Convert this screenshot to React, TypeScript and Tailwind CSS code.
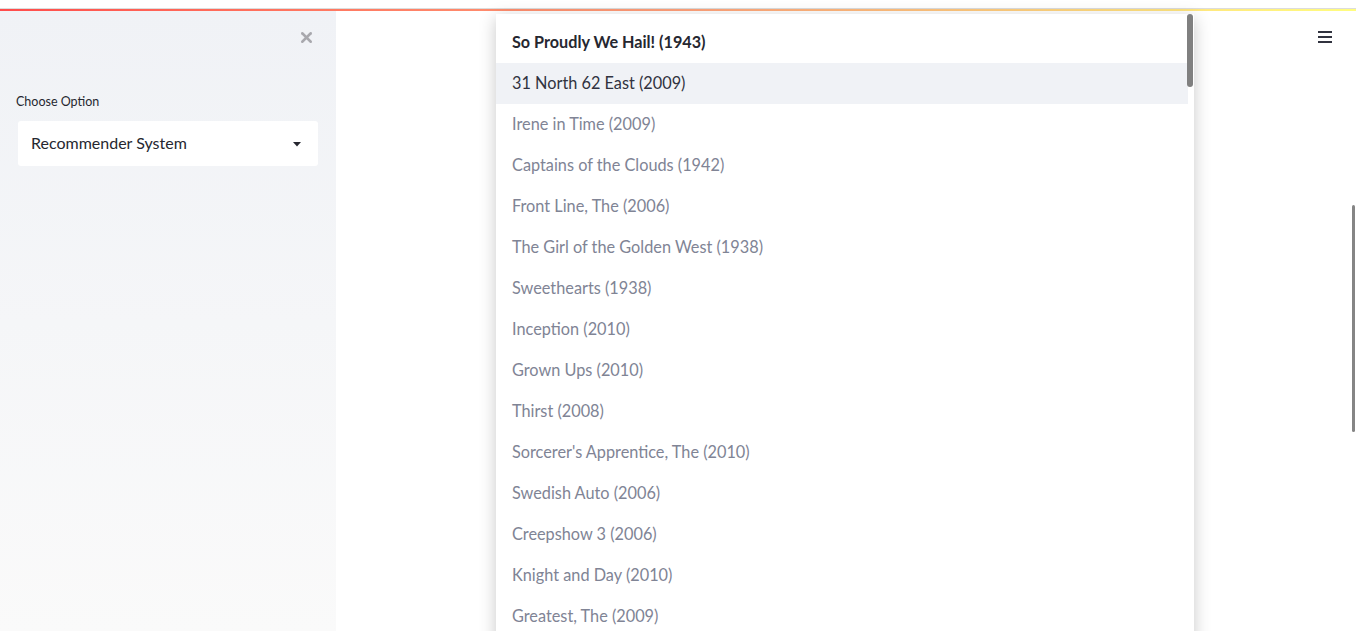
import { X } from 'lucide-react';

const movies = [
  'Irene in Time (2009)',
  'Captains of the Clouds (1942)',
  'Front Line, The (2006)',
  'The Girl of the Golden West (1938)',
  'Sweethearts (1938)',
  'Inception (2010)',
  'Grown Ups (2010)',
  'Thirst (2008)',
  "Sorcerer's Apprentice, The (2010)",
  'Swedish Auto (2006)',
  'Creepshow 3 (2006)',
  'Knight and Day (2010)',
  'Greatest, The (2009)',
];

const App = () => {
  return (
    <div className="relative h-[631px] w-[1356px] overflow-hidden bg-white font-['Lato',sans-serif]">
      {/* top decoration */}
      <div className="h-[8px] bg-white" />
      <div className="h-[1px] bg-[#dcdcdc]" />
      <div className="h-[2px] bg-gradient-to-r from-[#ff4b4b] via-[#ffa07a] to-[#fffd80]" />

      <div className="flex h-[620px]">
        {/* Sidebar */}
        <aside className="relative w-[336px] shrink-0 bg-gradient-to-b from-[#f0f2f6] to-[#fafafa]">
          <div className="flex justify-end pr-[21px] pt-[18px]">
            <X size={17} strokeWidth={3.5} className="text-[#a8a8ad]" />
          </div>
          <div className="pl-[16px] pt-[47px]">
            <div className="text-[12.5px] leading-[18px] text-[#262730]">Choose Option</div>
            <div className="mt-[10px] ml-[2px] flex h-[45px] w-[300px] items-center justify-between rounded-[3px] bg-white pb-[1px] pl-[13px] pr-[17px]">
              <span className="text-[16px] leading-[20px] text-[#262730]">Recommender System</span>
              <svg width="8" height="5" viewBox="0 0 8 5" className="mt-[2px]">
                <path d="M0 0 H8 L4 4.5 Z" fill="#262730" />
              </svg>
            </div>
          </div>
        </aside>

        {/* Main */}
        <main className="relative flex-1">
          <div className="flex justify-end pr-[24px] pt-[20px]">
            <div className="flex w-[14px] flex-col gap-[3px]">
              <span className="h-[2px] bg-[#31333f]" />
              <span className="h-[2px] bg-[#31333f]" />
              <span className="h-[2px] bg-[#31333f]" />
            </div>
          </div>
          {/* page scrollbar */}
          <div className="absolute right-[1px] top-[194px] h-[227px] w-[3px] rounded-full bg-[#858585]" />
        </main>
      </div>

      {/* open dropdown list */}
      <div className="absolute left-[496px] top-[14px] h-[640px] w-[698px] bg-white pt-[8px] shadow-[0_4px_16px_rgba(0,0,0,0.22)]">
        <div className="flex h-[41px] items-center pb-[1px] pl-[16px] text-[16.2px] font-bold text-[#262730]">
          So Proudly We Hail! (1943)
        </div>
        <div className="mr-[6px] flex h-[41px] items-center bg-[#f0f2f6] pb-[1px] pl-[16px] text-[16.3px] text-[#31333f]">
          31 North 62 East (2009)
        </div>
        {movies.map((m) => (
          <div key={m} className="flex h-[41px] items-center pb-[1px] pl-[16px] text-[16.3px] text-[#808495]">
            {m}
          </div>
        ))}
        <div className="absolute right-[1px] top-0 h-[73px] w-[6px] rounded-full bg-[#808080]" />
      </div>
    </div>
  );
};

export default App;
